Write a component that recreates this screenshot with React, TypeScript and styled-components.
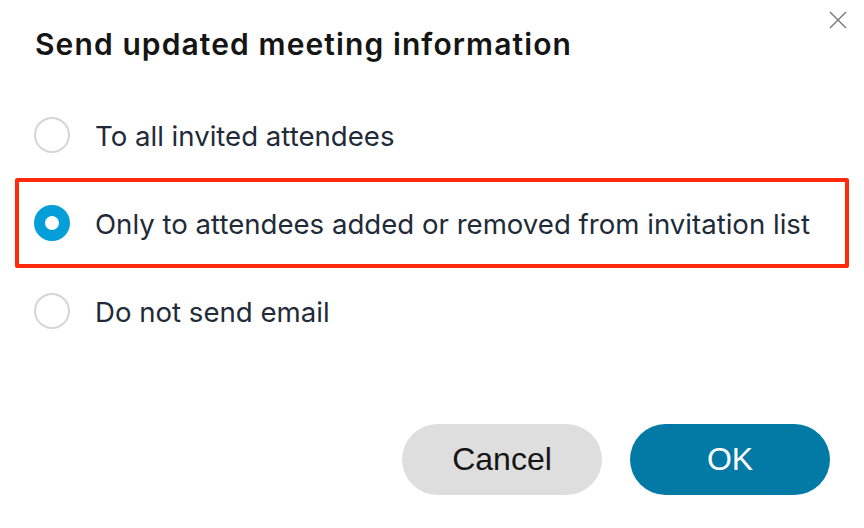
import styled, { createGlobalStyle } from "styled-components";

const GlobalStyle = createGlobalStyle`
  html, body {
    margin: 0;
    padding: 0;
    background: #fff;
  }
`;

const Dialog = styled.div`
  width: 864px;
  height: 528px;
  box-sizing: border-box;
  background: #fff;
  display: flex;
  flex-direction: column;
`;

const Header = styled.div`
  display: flex;
  justify-content: space-between;
  align-items: flex-start;
  padding: 10px 16px 0 35px;
`;

const Title = styled.h1`
  margin: 16px 0 0 0;
  font-family: Inter, "Liberation Sans", sans-serif;
  font-size: 30px;
  font-weight: 600;
  letter-spacing: 1.1px;
  color: #151515;
  line-height: 36px;
`;

const CloseButton = styled.button`
  border: 0;
  background: none;
  padding: 0;
  width: 20px;
  height: 20px;
  cursor: pointer;
  svg {
    display: block;
  }
`;

const Options = styled.div`
  display: flex;
  flex-direction: column;
  margin-top: 29px;
  padding: 0 15px;
`;

const Option = styled.label<{ $highlight?: boolean }>`
  display: flex;
  align-items: center;
  height: ${(p) => (p.$highlight ? 90 : 88)}px;
  margin: ${(p) => (p.$highlight ? "-1px 0" : "0")};
  box-sizing: border-box;
  padding-left: ${(p) => (p.$highlight ? 15 : 19)}px;
  border: ${(p) => (p.$highlight ? "4px solid #ff2a0a" : "none")};
  border-radius: 2px;
  cursor: pointer;
`;

const Radio = styled.span<{ $checked?: boolean }>`
  width: 36px;
  height: 36px;
  box-sizing: border-box;
  border-radius: 50%;
  flex-shrink: 0;
  background: #fff;
  border: ${(p) => (p.$checked ? "11px solid #049fd9" : "2px solid #d6d6d6")};
`;

const OptionText = styled.span`
  margin-left: 25px;
  margin-top: 2px;
  font-family: Inter, "Liberation Sans", sans-serif;
  font-size: 27.6px;
  color: #1f2b38;
`;

const Footer = styled.div`
  margin-top: auto;
  display: flex;
  justify-content: flex-end;
  gap: 28px;
  padding: 0 34px 33px 0;
`;

const Button = styled.button<{ $primary?: boolean }>`
  width: 200px;
  height: 71px;
  border: 0;
  border-radius: 36px;
  font-family: "Liberation Sans", Arial, sans-serif;
  font-size: 32px;
  background: ${(p) => (p.$primary ? "#027aa5" : "#dedede")};
  color: ${(p) => (p.$primary ? "#fff" : "#151515")};
  cursor: pointer;
`;

const options = [
  { label: "To all invited attendees" },
  { label: "Only to attendees added or removed from invitation list", checked: true },
  { label: "Do not send email" },
];

export default function App() {
  return (
    <>
      <GlobalStyle />
      <Dialog>
        <Header>
          <Title>Send updated meeting information</Title>
          <CloseButton aria-label="Close">
            <svg width="20" height="20" viewBox="0 0 20 20">
              <path d="M2 2L18 18M18 2L2 18" stroke="#777" strokeWidth="1.4" />
            </svg>
          </CloseButton>
        </Header>
        <Options>
          {options.map((o) => (
            <Option key={o.label} $highlight={o.checked}>
              <Radio $checked={o.checked} />
              <OptionText>{o.label}</OptionText>
            </Option>
          ))}
        </Options>
        <Footer>
          <Button>Cancel</Button>
          <Button $primary>OK</Button>
        </Footer>
      </Dialog>
    </>
  );
}
